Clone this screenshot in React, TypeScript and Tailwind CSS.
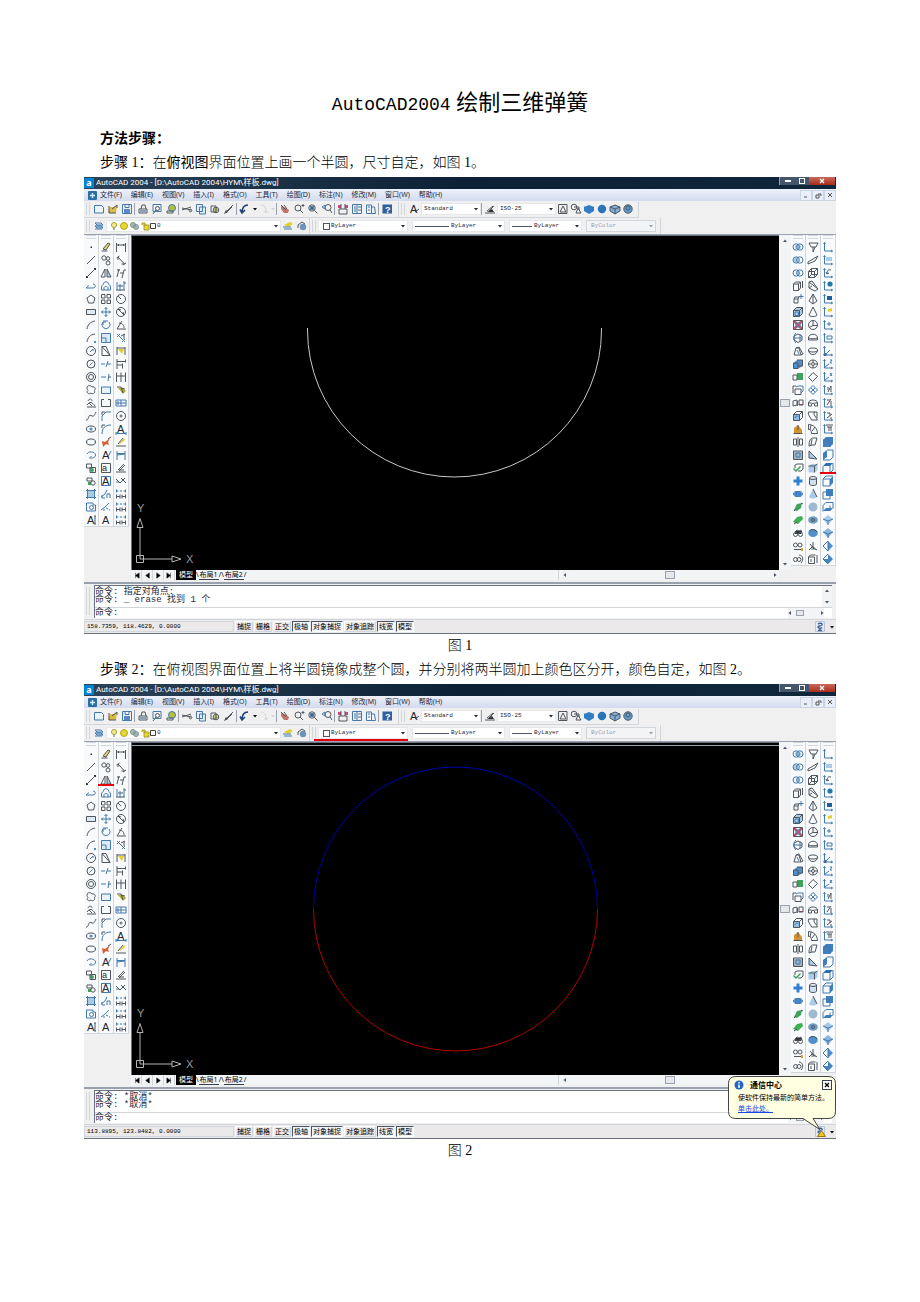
import clsx from "clsx";
import React from "react";

type Tool = {
  name: string;
  k?: string; // dark strokes
  b?: string; // blue strokes
  f?: string; // filled shape
  c?: string; // fill colour
  t?: string; // letter
};

const circ = (x: number, y: number, r: number, ry = r) =>
  `M${x - r} ${y}a${r} ${ry} 0 1 0 ${r * 2} 0a${r} ${ry} 0 1 0 ${-r * 2} 0z`;

const BLUE = "#4f8fcb";
const PALE = "#a9cbe8";
const YELLOW = "#e0cf2c";
const GREEN = "#3fa35c";
const DARK = "#2d3238";

const cube = "M1.5 4.5h6v6h-6zM1.5 4.5l3-3h6v6l-3 3M7.5 4.5l3-3";
const axes = "M2.5 1.500v8.500h8M1.500 3l1-1.500 1 1.500M9 9l1.500 1-1.500 1";
const dims = "M1.500 6.500v4M5 6.500v4M7 6.500v4M10.500 6.500v4M1.500 8.500h3.500M7 8.500h3.500";
const dimsTop = "M1.500 3h2M5 3h2M8.500 3h2M1.500 1.500v3M10.500 1.500v3";

const DRAW: Tool[] = [
  { name: "Point", f: "M5.500 5.500h1.500v1.500h-1.500z", c: DARK },
  { name: "Line", k: "M2 10L10 2" },
  { name: "Construction line", k: "M2 10L10 2", f: "M1 9h2v2h-2zM9 1h2v2h-2z", c: DARK },
  { name: "Polyline", b: "M1 8h7c3 0 3-4 0-4M1 8l3-2.500" },
  { name: "Polygon", k: "M6 2L10 5 8.500 10h-5L2 5z" },
  { name: "Rectangle", k: "M1.500 3.500h9v5h-9z", f: "M2 3.500h9v5h-9z", c: "#dceaf6" },
  { name: "Arc", k: "M2 10C2.500 6 5 3 10 2" },
  { name: "Arc continue", k: "M2 10C2.500 6 5 2.500 10 2", f: "M9 9h2v2h-2z", c: BLUE },
  { name: "Circle", k: circ(6, 6, 4.5), b: "M5 7l3-3v2" },
  { name: "Circle diameter", k: circ(6, 6, 4), b: "M4.500 7.500l3-3" },
  { name: "Donut", k: circ(6, 6, 4.5) + circ(6, 6, 2.5) },
  { name: "Revision cloud", k: "M2 4c0-3 4-3 5-1c3-1 4 2 2.500 3.500c1 3-2 4-3.500 2.500c-3 2-5-1-3-2.500c-1-1-1-2-1-2.500z" },
  { name: "Sketch", k: "M3 4c1-3 4-2 4 0M2 8c3-4 5-3 8 1M2 10h9M4 6l3 3" },
  { name: "Spline", k: "M1 10C4 11 3 4 6 5.500S9 6 11 2" },
  { name: "Ellipse", k: circ(6, 6, 4.5, 3), f: circ(6, 6, 1.6), c: BLUE },
  { name: "Ellipse axis", k: circ(6, 6, 4.5, 3), b: "M1.500 6h1M9.500 6h1" },
  { name: "Elliptical arc", b: "M2 5c1-3 8-3 8.500 1c0 3-4 3.500-6 3M4.500 9l2-2" },
  { name: "Insert block", k: "M1.500 2h5v4h-5zM5 5.500h5.500v5h-5.500z", f: circ(7, 8, 2), c: GREEN },
  { name: "Make block", k: "M2 3h5v3h-5z" + circ(8, 8, 2.2), f: "M3 7h3v3h-3z", c: GREEN },
  { name: "Hatch", b: "M2.500 1v10M9.500 1v10M1 2.500h10M1 9.500h10", f: "M2.500 2.500h7v7h-7z", c: PALE },
  { name: "Region", b: "M1.500 2h6.500v2h2.500v6h-9z" + circ(6.5, 6.5, 2) },
  { name: "Text", t: "A", k: "M10 2v8M9 2h2M9 10h2" },
];

const MODIFY: Tool[] = [
  { name: "Erase", f: "M3 8l5-6 2 1-4 6z", c: "#e5d46b", k: "M1.500 10h6M3 8l5-6 2 1-4 6z" },
  { name: "Copy", k: circ(4, 4, 2.2) + circ(8, 4.5, 1.8) + circ(8, 9, 2) },
  { name: "Mirror", k: "M5 2v8h-4zM7 2v8h4z", f: "M7 2v8h4z", c: PALE },
  { name: "Offset", b: "M1.500 10V7c0-2 2-2 2-3c0-3 5-3 5 0c0 1 2 1 2 3v3zM4 10V8c0-2 4-2 4 0v2" },
  { name: "Array", k: "M1.500 1.500h3.500v3.500h-3.500zM7 1.500h3.500v3.500h-3.500zM1.500 7h3.500v3.500h-3.500zM7 7h3.500v3.500h-3.500z" },
  { name: "Move", b: "M6 1.500v9M1.500 6h9M4.500 3l1.500-1.500 1.500 1.500M4.500 9l1.500 1.500 1.500-1.500M3 4.500l-1.500 1.500 1.500 1.500M9 4.500l1.500 1.500-1.500 1.500" },
  { name: "Rotate", b: "M3 3a4 4 0 1 0 6 0M3 3h3M3 3v3M3 2h5" },
  { name: "Scale", b: "M1.500 1.500h9v9h-9zM1.500 6h4.500v4.500", f: "M1.500 1.500h9v9h-9z", c: "#dceaf6" },
  { name: "Stretch", k: "M2 1.500v9h8zM2 1.500h4l4 9" },
  { name: "Trim", b: "M1 6h4M7 6h4M6 9l2-6" },
  { name: "Extend", b: "M1 6h5M9 3l-1 7", k: "M9 6h2" },
  { name: "Break at point", b: "M1.500 3h9v6.500h-9z", f: "M1.500 3h9v6.500h-9z", c: "#eaf2fa" },
  { name: "Break", k: "M4 2.500h-2.500v7h9v-7h-2.500" },
  { name: "Chamfer", b: "M2 11V6l4-4h5", k: "M2 5V2h3" },
  { name: "Fillet", b: "M2 11c0-6 3-9 9-9", k: "M2 5V2h3" },
  { name: "Explode", f: "M2 5l3 1 5-4-2 4 1 3-3-1-3 3z", c: "#db5d33", k: "M8 3l3-2" },
  { name: "Edit polyline", t: "A", b: "M8 8l3-6" },
  { name: "Multiline text", k: "M1.500 1.500h9v9h-9z", t: "a" },
  { name: "Edit text", b: "M1.500 1.500h9v9h-9z", t: "A" },
  { name: "Edit spline", b: "M1 9l4-3 2-4M2 7v3h3M7 10V6h3v4" },
  { name: "Edit attribute", b: "M1 9l4-3 4-4M6 7l2 1M4 8v2M9 9h1" },
  { name: "Text style", t: "A" },
];

const DIMENSION: Tool[] = [
  { name: "Linear dimension", k: "M1.500 2v9M10.500 2v9M1.500 4h9M3.500 3v2M8.500 3v2" },
  { name: "Aligned dimension", k: "M1.500 4l3-2M8 11l3-2M3 3l6.500 7M3 3v3M9.500 10h-3" },
  { name: "Ordinate dimension", k: "M2 10L4 2M5 6h3M7 11L9 3h2M2 3h3" },
  { name: "Jogged dimension", b: "M2 2v8M5 4v7M9 1v9", k: "M1 10h9M3 6h5M9 3h2" },
  { name: "Radius dimension", k: circ(6, 6, 4.5) + "M6 6L3 3" },
  { name: "Diameter dimension", k: circ(6, 6, 4.5) + "M3 3l6 6M3 3l3 1M9 9l-1-3" },
  { name: "Angular dimension", k: "M7 2L2 10h9M4 4c4 0 5 3 5 5" },
  { name: "Quick dimension", b: "M2 2l8 8M2 5l3-3M7 10l3-3", k: "M6 4l4-2M9 2v5M2 2l4 4" },
  { name: "Quick select", k: "M2 2v8M10 2v8M2 3h8", f: "M3 4h6l-2 5z", c: YELLOW },
  { name: "Baseline dimension", k: "M2 1v10M2 3.500h9M10.500 1.500v3M2 7h6M7.500 5.500v5" },
  { name: "Continue dimension", k: "M1.500 1.500v9.500M6 1.500v9.500M10.500 1.500v9.500M1.500 5h9" },
  { name: "Leader", k: "M2 3h4l2 6M6 4l4 1", f: "M3 4h5l3 3-3 3z", c: "#b6ac22" },
  { name: "Tolerance", b: "M1 3h10v6H1zM6 3v6M3 4v4M1 6h10" },
  { name: "Center mark", k: circ(6, 6, 4.5) + "M4.500 6h3M6 4.500v3" },
  { name: "Edit dimension", t: "A", b: "M1 10.500h10M1 9v3M11 9v3" },
  { name: "Edit dimension text", k: "M1 10h10M3 8l5-6", f: "M4 8l5-6 1 2-5 4z", c: YELLOW },
  { name: "Update dimension", b: "M2 2v9M10 2v9M2 4.500h8M2 6l8-1" },
  { name: "Dimension style", k: "M1 10h10M3 8l6-6M4 9l6-6M4 8h5" },
  { name: "Override", k: "M1 4l4 4M5 8l5-5M6 3l5 5", b: "M1 7h3" },
  { name: "Spacing", k: dims, b: dimsTop },
  { name: "Break dimension", k: dims, b: dimsTop },
  { name: "Inspect", k: dims, b: dimsTop },
];

const SOLIDS_EDIT: Tool[] = [
  { name: "Union", b: circ(4.2, 6, 3.2) + circ(7.8, 6, 3.2), f: circ(6, 6, 3, 2.5), c: PALE },
  { name: "Subtract", b: circ(4.2, 6, 3.2) + circ(7.8, 6, 3.2), f: circ(4, 6, 2.5), c: PALE },
  { name: "Intersect", b: circ(4.2, 6, 3.2) + circ(7.8, 6, 3.2), f: circ(6, 6, 1.4, 2.5), c: PALE },
  { name: "Extrude faces", k: "M1.500 4h5v6.500h-5zM1.500 4l2-2h5l-2 2M8.500 2v6l-2 2.500M10.500 1v7" },
  { name: "Move faces", k: "M2 6h4v4h-4zM2 6l1-2h4l-1 2", b: "M9 1v5M6.500 3.500h5" },
  { name: "Offset faces", k: cube, b: "M3 6h3.500v3.500h-3.500z", f: "M1.500 4.500l3-3h6v6l-3 3h-6z", c: PALE },
  { name: "Delete faces", k: "M1.500 1.500h9v9h-9z", b: "M4 4h4v4h-4z", f: "M2 2h2l2 2.500 2-2.500h2v2l-2.500 2 2.500 2v2h-2l-2-2.500-2 2.500h-2v-2l2.500-2-2.500-2z", c: "#bf5866" },
  { name: "Rotate faces", k: "M2 4l4-2 4 2v4l-4 2.500-4-2.500z", b: "M4 1c-3 3-3 7 0 10M8 2v8M2 6h8" },
  { name: "Taper faces", k: "M2 10l2-7h3l2 7zM4 3l3-1 4 7-2 1", b: "M5 5l2 4" },
  { name: "Copy faces", k: "M1.500 5h4.500v5.500h-4.500zM5 2h5.500v6h-4.500", f: "M1.500 5l3.500-3h5.500v6l-4 2.500h-5z", c: BLUE },
  { name: "Color faces", k: "M1 4h4v5h-4z", f: "M5 2h6v7h-6z", c: GREEN },
  { name: "Copy edges", k: "M3 5h6v5.500h-6zM1 2h3M1 2v7", b: "M4 3l2-1h5v5l-2 2" },
  { name: "Color edges", k: "M1 4l4-1v5l-4 1zM7 3h4v5h-4z", f: "M5 4h1v5h-1zM7 7h4v1h-4z", c: "#c8435a" },
  { name: "Imprint", k: cube, b: "M3 8c1-3 3-2 3-1", f: "M1.500 4.500h6v6h-6z", c: "#8ec0e6" },
  { name: "Clean", f: "M2 10V5l4-3 4 5v3z", c: "#d39335", k: "M1.500 10.500h9M6 2v5" },
  { name: "Separate", k: "M1.500 3h3v6h-3zM7.500 3h3v6h-3zM6 1v10" },
  { name: "Shell", k: "M1.500 2h9v8.500h-9z", b: "M4 4h4v4h-4z", f: "M2 2.500h8v8h-8z", c: "#9fb5c4" },
  { name: "Check", k: "M3 3l2-1h6v5l-2 2h-3M3 3v3", f: "M1 7l1-1 2 2 4-4 1 1-5 5z", c: GREEN },
  { name: "3D move", f: "M4.500 1.500h3v3h3v3h-3v3h-3v-3h-3v-3h3z", c: "#2f80cf" },
  { name: "3D rotate", b: circ(6, 6, 4.5, 2.5) + "M4 3v6M8 3v6", f: circ(6, 6, 4, 2.5), c: "#3f8dda" },
  { name: "Render", f: "M2 9l3-6 5-1-1 5-4 3z", c: GREEN, k: "M2 10l2-2M9 2l2 1" },
  { name: "Scene", f: "M1 8l4-5 5-1 1 3-5 5z", c: "#3db04f", k: "M2 10l3-2" },
  { name: "Light", k: circ(3.5, 7.5, 2) + circ(8.5, 7.5, 2) + "M3 5l2-2 2 1 2-1 1 3", f: "M3 4h6v3h-6z", c: DARK },
  { name: "Materials", k: circ(3.5, 5, 2) + circ(8, 5, 2) + "M2 9.500h7", f: "M9 8h2v3h-2z", c: "#d7a126" },
  { name: "Mapping", k: circ(3.5, 6.5, 2) + circ(7, 6.5, 2) + "M7 2c4 0 5 5 2 8" },
];

const SURFACES: Tool[] = [
  { name: "2D solid", k: "M2 2h9l-2 4h-5zM6 6v5l2-5" },
  { name: "3D face", k: "M1 8l5-3 5-3-3 5-7 3z" },
  { name: "Box", k: cube + "M4.500 1.500v6h6M4.500 7.500l-3 3" },
  { name: "Wedge", k: "M2 2v6l6 3 3-2zM2 2l3-1 6 8M2 8l3-2" },
  { name: "Pyramid", k: "M6 1L2 8l4 3 4-3zM6 1v10" },
  { name: "Cone", k: "M6 1L2 9c0 2 8 2 8 0z" },
  { name: "Sphere", k: circ(6, 6, 4.5) + "M6 1.500v5l-4 2M6 6.500h4.500" },
  { name: "Dome", k: "M1.500 6c0-5 9-5 9 0v2h-9zM1.500 6c2 1 7 1 9 0" },
  { name: "Dish", k: circ(6, 5, 4.5, 2) + "M1.500 5c0 6 9 6 9 0" },
  { name: "Torus", k: circ(6, 6, 4.5, 4) + circ(6, 6, 1.5) + "M6 2v2.500M6 7.500v2.500M1.500 6h3M7.500 6h3" },
  { name: "Edge", k: "M6 1.500l4.500 4-5 5-4-4z" },
  { name: "3D mesh", b: "M6 1.500l4.500 4.500-4.500 4.500-4.500-4.500zM4 4l4 4M8 4l-4 4" },
  { name: "Revolved surface", k: "M1.500 9V6c0-4 9-4 9 0v3h-3V7c0-1-3-1-3 0v2zM1.500 6h3M7.500 6h3" },
  { name: "Tabulated surface", k: "M1.500 2h6c-2 3 2 5 3 8h-6c-1-3-4-5-3-8zM7 2l3 0v6" },
  { name: "Ruled surface", k: "M1.500 1.500c5 0 9 4 9 9h-6c0-3-1-4-3-4zM4 2l-1 5M8 4l-3 4" },
  { name: "Edge surface", k: "M2 10c0-6 2-8 4-8h4l-2 7h-3zM5 3l-1 6" },
  { name: "Solid wedge", f: "M2 2v7l8 1z", c: PALE, k: "M2 2v7l8 1z" },
  { name: "Solid box", f: "M1.500 4l3-2h6v6l-3 2.500h-6z", c: PALE, k: "M7.500 4v6.500M1.500 4h6l3-2" },
  { name: "Solid cylinder", f: "M2.500 3h7v7h-7z", c: "#cfe0ef", k: circ(6, 3, 3.5, 1.5) + "M2.500 3v6c0 2 7 2 7 0V3" },
  { name: "Solid cone", f: "M6 1L2 9c2 2 6 2 8 0z", c: PALE, k: "M6 1l4 8" },
  { name: "Solid sphere", f: circ(6, 6, 4.5), c: "#9fb9d2" },
  { name: "Solid torus", f: circ(6, 6, 4.8, 3.8), c: "#6f9cc2", k: circ(6, 6, 1.5) },
  { name: "Revolve", f: circ(6, 6, 4.8, 4), c: BLUE, k: "M2 4c2-2 6-2 8 1" },
  { name: "Slice", k: "M2 10l4-4M6 2v5l4 3M3 4l4 5", f: "M5 6l5 4h-6z", c: "#a5adb6" },
  { name: "Section", k: "M1.500 4h6v6.500h-6zM4 6v3M1.500 4l2-2h5M10 2v8" },
];

const VIEWS: Tool[] = [
  { name: "UCS", b: axes },
  { name: "Display UCS", b: axes, f: "M4 3h6v4h-6z", c: PALE },
  { name: "UCS previous", b: axes, k: "M9 3c-3-1-4 1-4 4M4 5l1 2 2-1" },
  { name: "World UCS", b: axes, f: circ(8, 4, 2.6), c: "#2379a8" },
  { name: "Object UCS", b: axes, f: "M5 3h5v4h-5z", c: "#1f5f9b" },
  { name: "Face UCS", b: axes, f: "M6 3l4-1v3l-4 1z", c: YELLOW },
  { name: "View UCS", b: axes + "M7 3v4M5 5h4" },
  { name: "Origin UCS", b: axes + "M5 4h5v3h-5z" },
  { name: "Z axis vector", b: axes + "M3 10l5-5", f: circ(3, 9.5, 1.5), c: DARK },
  { name: "3 point UCS", b: axes + "M3 9l4-3M8 2h2l-2 3h2" },
  { name: "X rotate UCS", b: axes + "M3 9l4-3M8 2l2 3M10 2l-2 3" },
  { name: "Y rotate UCS", b: axes, k: "M6 8l3-6M9 2v6M6 3v3" },
  { name: "Z rotate UCS", b: axes, k: "M5 8l4-6M9 4v5M5 3h3" },
  { name: "Apply UCS", b: axes, k: "M5 3h3v3M5 8l5-4M9 7v2" },
  { name: "Named UCS", b: axes, k: "M4 2h7M5 4h5M7 4v4M9 4v4" },
  { name: "Top view", f: "M1 4l3-3h7v7l-3 3h-7z", c: "#3e7fc0", b: "M1 4h7v7" },
  { name: "Left view", f: "M1 4l4-3v7l-4 3z", c: "#3e7fc0", b: "M5 1h6v7l-3 3h-7" },
  { name: "Plan view", f: "M1 4l3-3h7l-3 3z", c: "#2c6eb4", b: "M1 4v7h7v-7M11 1v7l-3 3" },
  { name: "Right view", f: "M8 4l3-3v7l-3 3z", c: "#3e7fc0", b: "M1 4h7v7h-7zM1 4l3-3h7" },
  { name: "Back view", f: "M4 1h7v7h-7z", c: "#3e7fc0", b: "M1 4h7v7h-7z" },
  { name: "Bottom view", f: "M1 10l3-3h7l-3 3z", c: "#3e7fc0", b: "M1 10.500v-6l3-3h7v6M8 4.500v5.500" },
  { name: "SW isometric", f: "M6 1l5 4-5 6-5-6z", c: PALE, b: "M1 5l5 2 5-2M6 7v4" },
  { name: "SE isometric", f: "M6 1l5 4-5 6-5-6z", c: "#8bb6dc", b: "M1 5l5 2 5-2M6 7v4" },
  { name: "NE isometric", f: "M6 1l5 5-5 5z", c: BLUE, b: "M6 1l-5 5 5 5M6 1v10" },
  { name: "NW isometric", f: "M6 1l5 5-5 5zM6 6l-5 0 5 5z", c: "#4682bd", b: "M6 1l-5 5 5 5" },
];

const STANDARD: Tool[][] = [
  [
    { name: "New", b: "M1.500 2.500h7l2 2v5.500h-9z", f: "M2 3h7v6h-7z", c: "#eaf4fc" },
    { name: "Open", f: "M1 10l2-6h4l3-2-1 8z", c: "#d9bb45", k: "M2 3v7h7M5 6l5-4v3" },
    { name: "Save", b: "M1.500 1.500h9v9h-9zM4 1.500v3h4v-3", f: "M3 6h6v4.500h-6z", c: "#5a86c5" },
  ],
  [
    { name: "Plot", k: "M2 6h8v4h-8zM4 6l1-4h3l1 4", f: "M3 7h6v2h-6z", c: "#8aa0ba" },
    { name: "Plot preview", b: "M2 1.500h8v7h-8z", k: circ(6.5, 5.5, 2) + "M5 7l-3 4" },
    { name: "Publish", f: circ(7, 5, 3.5), c: "#b5bf3e", b: circ(7, 5, 3.5), k: "M2 8h6v2h-6z" },
  ],
  [
    { name: "Cut", k: "M1 5l9 2M1 7l9-3" + circ(9.5, 7.5, 1.3) },
    { name: "Copy", b: "M1.500 1.500h6v7h-6zM4.500 4h6v7h-6z", f: "M4.500 4h6v6.500h-6z", c: "#dcebf8" },
    { name: "Paste", k: "M2 3h5v6h-5z" + circ(7, 7, 2.8), f: circ(7, 7, 2), c: "#b9bf62" },
    { name: "Match properties", k: "M2 10l8-8M3 10l6-6", f: "M1 11l2-4 2 2z", c: DARK },
  ],
];

const ZOOMS: Tool[][] = [
  [
    { name: "Pan", f: "M2 3l3 1 5 3-1 3h-4l-3-4z", c: "#c27468", k: "M2 2l5 5M5 2l3 4" },
    { name: "Zoom realtime", k: circ(5, 5, 3) + "M7 7l3 3M10 1v3M8.500 2.500h3" },
    { name: "Zoom window", k: circ(5, 5, 3.2) + "M7.500 7.500l3 3M3.500 5h3M5 3.500v3", f: "M3 3h4v4h-4z", c: BLUE },
    { name: "Zoom previous", k: circ(7, 4.5, 3) + "M9 7l2 3", b: "M1 4l3-2v4z" },
  ],
  [
    { name: "Properties", k: "M2 6h8v5h-8zM4 1v5M8 1v5", f: "M1 2h3v3h-3zM8 2h3v3h-3z", c: "#c94c86" },
    { name: "DesignCenter", b: "M1.500 1.500h9v9h-9zM6 1.500v9M3 4h2M3 6h2M3 8h2M7 4h3M7 7h3" },
    { name: "Tool palettes", b: "M1.500 2h5v8.500h-5zM6.500 4h3l1 6.500h-4zM3 4h2M3 7h2" },
  ],
  [{ name: "Help", f: "M1.500 1.500h9.500v9h-9.500z", c: "#2f5f9f", t: "?" }],
];

const SHADING: Tool[] = [
  { name: "2D wireframe", k: "M1.500 1.500h8.500v9h-8.500zM6 3l-3 6h6z" },
  { name: "3D wireframe", k: circ(4, 4, 2.8) + "M4 4h5v3M8 5l-2 5h5z" },
  { name: "Flat shaded", f: "M1 4l5-2 5 2v4l-5 3-5-3z", c: "#2c7fca", b: "M1 4l5 2 5-2M6 6v4" },
  { name: "Gouraud shaded", f: circ(6, 6, 4.2), c: "#2774bd", b: "M4 4h2" },
  { name: "Flat with edges", f: "M1 4l5-2 5 2v4l-5 3-5-3z", c: "#7eb0de", k: "M1 4l5-2 5 2v4l-5 3-5-3zM1 4l5 2 5-2M6 6v5" },
  { name: "Gouraud with edges", f: circ(6, 6, 4.2), c: "#5e9dd2", k: circ(6, 6, 4.2) + circ(6, 5, 2) },
];

const MENUS = ["文件(F)", "编辑(E)", "视图(V)", "插入(I)", "格式(O)", "工具(T)", "绘图(D)", "标注(N)", "修改(M)", "窗口(W)", "帮助(H)"];

const MODES: [string, boolean][] = [
  ["捕捉", false],
  ["栅格", false],
  ["正交", false],
  ["极轴", true],
  ["对象捕捉", true],
  ["对象追踪", false],
  ["线宽", true],
  ["模型", true],
];

function Icon({ tool }: { tool: Tool }) {
  return (
    <svg viewBox="0 0 12 12" className="size-3 shrink-0" fill="none" strokeWidth="1" aria-hidden="true">
      {tool.f && <path d={tool.f} fill={tool.c} />}
      {tool.k && <path d={tool.k} stroke="#50565e" />}
      {tool.b && <path d={tool.b} stroke="#4479ab" />}
      {tool.t && (
        <text
          x={tool.t === "?" ? 4 : 2}
          y={tool.t === "a" ? 9 : 10}
          fontSize={tool.t === "A" ? 11 : 9}
          fontWeight={tool.t === "?" ? 700 : 400}
          fontFamily="Liberation Sans, sans-serif"
          fill={tool.t === "?" ? "#fff" : "#22272c"}
        >
          {tool.t}
        </text>
      )}
    </svg>
  );
}

function ToolButton({ tool, narrow }: { tool: Tool; narrow?: boolean }) {
  return (
    <button aria-label={tool.name} className={clsx("flex items-center justify-center h-[13px] shrink-0", narrow ? "w-[13px]" : "w-3.5")}>
      <Icon tool={tool} />
    </button>
  );
}

function Arrow({ className }: { className?: string }) {
  return (
    <svg viewBox="0 0 4 4" className={clsx("size-1 shrink-0", className)} aria-hidden="true">
      <path d="M0 1h4L2 3.500z" fill="currentColor" />
    </svg>
  );
}

function Grip() {
  return <div className="w-1 h-3 mx-0.5 shrink-0 border-x border-gray-300" />;
}

function Divider() {
  return <div className="w-0.5 h-3 shrink-0 border-l border-gray-400" />;
}

function Dropdown({
  label,
  value,
  className,
  children,
  disabled,
  pad,
}: {
  label: string;
  value: string;
  className: string;
  children?: React.ReactNode;
  disabled?: boolean;
  pad?: string;
}) {
  return (
    <div className={clsx("relative flex items-center h-3 shrink-0 border", disabled ? "bg-gray-100 border-gray-300 text-gray-400" : "bg-white border-gray-200 text-gray-800", className)}>
      <div className="absolute left-0.5 flex items-center pointer-events-none">{children}</div>
      <select
        aria-label={label}
        disabled={disabled}
        className={clsx("appearance-none w-full h-full bg-transparent font-['Liberation_Mono',monospace] text-[6px] leading-[10px]", pad ?? "pl-0.5")}
      >
        <option>{value}</option>
      </select>
      <Arrow className="absolute right-0.5 pointer-events-none" />
    </div>
  );
}

function Palette({ tools, marked }: { tools: Tool[]; marked?: string }) {
  return (
    <div className="w-[15px] shrink-0 bg-slate-50 border-r border-b border-gray-300 self-start">
      <div className="h-1 mx-0.5 mb-px border-y border-gray-300" />
      {tools.map((tool) => (
        <div key={tool.name} className="relative flex justify-center h-[13px]">
          <ToolButton tool={tool} narrow />
          {tool.name === marked && <div className="absolute -inset-x-px bottom-0 h-0.5 bg-red-600" />}
        </div>
      ))}
    </div>
  );
}

function TitleBar() {
  return (
    <div className="flex items-center h-3 bg-linear-to-r from-[#2b4258] via-[#0c2136] to-[#10263b] text-white">
      <div className="flex items-center justify-center size-2.5 mr-0.5 bg-sky-600 text-[9px] leading-[8px] font-bold">a</div>
      <div className="font-['Roboto','Noto_Sans_CJK_SC',sans-serif] text-[8px] leading-3 whitespace-nowrap">AutoCAD 2004 - [D:\AutoCAD 2004\HYM\样板.dwg]</div>
      <div className="flex ml-auto mr-px self-start h-2">
        <button aria-label="Minimize" className="flex items-center justify-center w-4 bg-slate-600 border-l border-slate-400">
          <div className="w-1.5 h-0.5 bg-white" />
        </button>
        <button aria-label="Restore" className="flex items-center justify-center w-3.5 bg-slate-600">
          <div className="size-1.5 border border-white" />
        </button>
        <button aria-label="Close" className="flex items-center justify-center w-[26px] bg-linear-to-b from-[#c9685c] to-[#a82a18]">
          <svg viewBox="0 0 6 6" className="size-1.5" aria-hidden="true">
            <path d="M1 1l4 4M5 1L1 5" stroke="#fff" strokeWidth="1.3" />
          </svg>
        </button>
      </div>
    </div>
  );
}

function MenuBar() {
  return (
    <div className="flex items-center h-3 pl-1 bg-linear-to-b from-[#eef1fa] to-[#d3dbef]">
      <svg viewBox="0 0 9 9" className="size-[9px] mr-[3px] shrink-0" aria-hidden="true">
        <rect width="9" height="9" rx="1" fill="#2b6fa5" />
        <path d="M2 4.500h5M4.500 2v5" stroke="#d6ecfa" strokeWidth="1.4" />
      </svg>
      <div className="flex gap-[9px]">
        {MENUS.map((menu) => (
          <button key={menu} className="text-[7px] leading-3 whitespace-nowrap text-gray-800">
            {menu}
          </button>
        ))}
      </div>
      <div className="flex ml-auto">
        {["M2 6h3", "M2 4h3v3h-3zM4 3h3v2", "M2 2l4 4M6 2l-4 4"].map((d) => (
          <button key={d} aria-label="Document window" className="flex items-center justify-center w-3 h-[11px] border border-slate-300 bg-[#e8eefa]">
            <svg viewBox="0 0 8 8" className="size-2" fill="none" stroke="#555" aria-hidden="true">
              <path d={d} />
            </svg>
          </button>
        ))}
      </div>
    </div>
  );
}

function StandardToolbar() {
  return (
    <div className="flex items-center h-[17px]">
      <div className="flex items-center h-4 pr-1 border-r border-b border-gray-300">
        <Grip />
        {STANDARD.map((group) => (
          <React.Fragment key={group[0].name}>
            {group.map((tool) => (
              <ToolButton key={tool.name} tool={tool} />
            ))}
            <Divider />
          </React.Fragment>
        ))}
        <button aria-label="Undo" className="w-3.5 text-[#1f3f78]">
          <svg viewBox="0 0 12 12" className="size-3" fill="none" stroke="currentColor" strokeWidth="1.6" aria-hidden="true">
            <path d="M10 2c-4 0-6 3-6 8M2 6.500l2 3.500 3-3" />
          </svg>
        </button>
        <Arrow className="mx-px" />
        <button aria-label="Redo" className="w-3 text-gray-300">
          <svg viewBox="0 0 12 12" className="size-3" fill="none" stroke="currentColor" aria-hidden="true">
            <path d="M3 2c4 0 5 3 5 7M6 8l2 2 2-2" />
          </svg>
        </button>
        <Arrow className="mx-px text-gray-300" />
        {ZOOMS.map((group) => (
          <React.Fragment key={group[0].name}>
            <Divider />
            {group.map((tool) => (
              <ToolButton key={tool.name} tool={tool} />
            ))}
          </React.Fragment>
        ))}
      </div>
      <div className="flex items-center h-4 pr-1 border-r border-b border-gray-300">
        <Grip />
        <ToolButton tool={{ name: "Text style manager", t: "A", k: "M7 9l4-3" }} />
        <Dropdown label="Text style" value="Standard" className="w-[60px]" />
        <Divider />
        <ToolButton tool={{ name: "Dimension style manager", k: "M1 10h10M3 8l6-5M4 9l6-6", f: "M3 9l5-3 2 3z", c: DARK }} />
        <Dropdown label="Dimension style" value="ISO-25" className="w-[59px]" />
        {SHADING.map((tool) => (
          <ToolButton key={tool.name} tool={tool} narrow />
        ))}
      </div>
    </div>
  );
}

function LayerToolbar({ marked }: { marked?: boolean }) {
  return (
    <div className="flex items-center h-[17px] border-b border-gray-400">
      <div className="flex items-center h-4 border-r border-gray-300">
        <Grip />
        <ToolButton tool={{ name: "Layer manager", b: "M2 3h6l2 2h-6zM2 6h6l2 2h-6zM2 9h7", f: "M2 5h8v3h-7z", c: PALE }} />
        <Dropdown label="Layer" value="0" className="w-[175px]" pad="pl-[50px]">
          <svg viewBox="0 0 48 10" className="w-12 h-2.5" fill="none" aria-hidden="true">
            <path d={circ(5, 4, 2.5)} fill="#f5ef8e" stroke="#a69a35" />
            <path d="M4 8h2" stroke="#555" />
            <path d={circ(15, 5, 3.5)} fill="#e6d82e" stroke="#b3a61c" />
            <path d={circ(24, 4, 2.5) + circ(27, 6, 2.5)} fill="#a7b8b4" stroke="#7e9490" />
            <path d="M33 4V2h3v3M35 4h5v5h-5z" fill="#e6d82e" stroke="#a69a35" />
            <path d="M41.500 2.500h5v5h-5z" fill="#fff" stroke="#444" />
          </svg>
        </Dropdown>
        <ToolButton tool={{ name: "Make layer current", f: "M2 5l6-3 3 2-5 3z", c: YELLOW, b: "M1 7h8M2 9h8" }} />
        <ToolButton tool={{ name: "Layer previous", f: circ(7, 7, 3.2), c: "#6f93b7", k: "M2 5l4-3 3 2M2 5v3" }} />
      </div>
      <div className="flex items-center gap-1 h-4 pr-1 border-r border-gray-300">
        <Grip />
        <div className="relative -ml-1">
          <Dropdown label="Color" value="ByLayer" className="w-[90px]" pad="pl-3">
            <div className="size-[7px] ml-0.5 border border-gray-600" />
          </Dropdown>
          {marked && <div className="absolute -left-1 right-0 top-3 h-0.5 bg-red-600" />}
        </div>
        <Dropdown label="Linetype" value="ByLayer" className="w-[93px]" pad="pl-[38px]">
          <div className="w-[34px] border-t border-gray-600" />
        </Dropdown>
        <Dropdown label="Lineweight" value="ByLayer" className="w-[73px]" pad="pl-6">
          <div className="w-5 border-t border-gray-600" />
        </Dropdown>
        <Dropdown label="Plot style" value="ByColor" className="w-[70px]" pad="pl-1" disabled />
      </div>
    </div>
  );
}

function Canvas({ full }: { full?: boolean }) {
  return (
    <div className={clsx("relative bg-black border-l border-t border-gray-500", full ? "h-[333px]" : "h-[335px]")}>
      <svg viewBox={full ? "0 0 646 332" : "0 0 646 334"} className="w-full h-full" fill="none" aria-hidden="true">
        {full ? (
          <>
            <path d="M181 166a142 142 0 0 1 284 0" stroke="#0000a8" />
            <path d="M181 166a142 142 0 0 0 284 0" stroke="#b40000" />
          </>
        ) : (
          <path d="M175 92v2a147 147 0 0 0 294 0v-2" stroke="#c8c8c8" />
        )}
      </svg>
      {full && <div className="absolute inset-x-0 top-0.5 border-t border-gray-400" />}
      <svg viewBox="0 0 70 70" className="absolute left-0 bottom-0 size-[70px]" fill="none" stroke="#b5b5b5" aria-hidden="true">
        <path d="M4.500 55.500h7v7h-7zM8 59V27M5 27.500l3-9 3 9zM8 59h32M40 56l9 3-9 3z" />
        <text x="5" y="12" fontSize="11" fontFamily="Liberation Sans, sans-serif" fill="#9a9a9a" stroke="none">
          Y
        </text>
        <text x="54" y="63" fontSize="11" fontFamily="Liberation Sans, sans-serif" fill="#9a9a9a" stroke="none">
          X
        </text>
      </svg>
    </div>
  );
}

function LayoutTabs() {
  return (
    <div className="flex items-center h-2.5 bg-gray-100 text-black text-[7px] leading-[10px]">
      {["M3 1v6M7 1v6L3 4z", "M6 1v6L2 4z", "M2 1v6l4-3z", "M5 1v6M1 1v6l4-3z"].map((d) => (
        <button key={d} aria-label="Scroll tabs" className="flex items-center justify-center w-[11px] h-2.5 border-r border-gray-300">
          <svg viewBox="0 0 8 8" className="size-[7px]" aria-hidden="true">
            <path d={d} fill="#000" stroke="#000" strokeWidth=".6" />
          </svg>
        </button>
      ))}
      <button className="h-full px-[3px] ml-px bg-black text-white">模型</button>
      <span aria-hidden="true">\</span>
      <button className="px-px border-b border-gray-700 leading-[9px]">布局1</button>
      <span aria-hidden="true">/\</span>
      <button className="px-px border-b border-gray-700 leading-[9px]">布局2</button>
      <span aria-hidden="true">/</span>
      <div className="flex flex-1 items-center justify-between ml-[48%] h-full pl-1 pr-0.5 border-l border-gray-300 text-gray-600">
        <Arrow className="rotate-90" />
        <div className="w-2.5 h-2 bg-gray-200 border border-gray-400" />
        <Arrow className="-rotate-90" />
      </div>
    </div>
  );
}

function Balloon() {
  return (
    <div className="absolute right-0 bottom-2 w-[108px] h-[54px]">
      <svg viewBox="0 0 108 54" className="absolute inset-0 w-full h-full" aria-hidden="true">
        <path
          d="M8 .500h92q7.500 0 7.500 7v28q0 7-7.500 7h-15l7 11-17-11h-67q-7.500 0-7.500-7v-28q0-7 7.500-7z"
          fill="#ffffe1"
          stroke="#444"
        />
      </svg>
      <div className="relative pt-1 pl-2.5 pr-1 text-black">
        <div className="flex items-center">
          <svg viewBox="0 0 10 10" className="size-2.5 -ml-1 mr-1.5" aria-hidden="true">
            <circle cx="5" cy="5" r="4.500" fill="#2467c4" />
            <path d="M5 2v1.500M5 4.500v3.500" stroke="#fff" strokeWidth="1.500" />
          </svg>
          <strong className="text-[8px] leading-[10px]">通信中心</strong>
          <button aria-label="Close message" className="flex items-center justify-center size-2.5 ml-auto border border-gray-700 bg-white">
            <svg viewBox="0 0 6 6" className="size-1.5" aria-hidden="true">
              <path d="M1 1l4 4M5 1L1 5" stroke="#000" strokeWidth="1.300" />
            </svg>
          </button>
        </div>
        <p className="mt-0.5 text-[7px] leading-[11px] whitespace-nowrap">使软件保持最新的简单方法。</p>
        <a href="#update" className="block text-[7px] leading-[11px] text-blue-700 underline">
          单击此处。
        </a>
      </div>
    </div>
  );
}

function CadWindow({
  full,
  lines,
  coords,
}: {
  full?: boolean;
  lines: string[];
  coords: string;
}) {
  return (
    <div className="relative flex flex-col bg-[#f0f0f0] overflow-hidden border-b border-gray-500 font-['Noto_Sans','Noto_Sans_CJK_SC',sans-serif]">
      <TitleBar />
      <MenuBar />
      <StandardToolbar />
      <LayerToolbar marked={full} />
      <div className="flex">
        <div className="flex pr-0.5">
          <Palette tools={DRAW} />
          <Palette tools={MODIFY} marked={full ? "Mirror" : undefined} />
          <Palette tools={DIMENSION} />
        </div>
        <div className="flex-1 min-w-0">
          <Canvas full={full} />
          <LayoutTabs />
        </div>
        <div className={clsx("flex flex-col items-center justify-between w-3 shrink-0 py-1 bg-gray-100 text-gray-600", full ? "h-[333px]" : "h-[335px]")}>
          <Arrow className="rotate-180" />
          <div className="w-2.5 h-2 bg-gray-200 border border-gray-400" />
          <Arrow />
        </div>
        <div className="flex">
          <Palette tools={SOLIDS_EDIT} />
          <Palette tools={SURFACES} />
          <Palette tools={VIEWS} marked={full ? undefined : "Plan view"} />
        </div>
      </div>
      <div className="flex mt-0.5 pt-px pr-1 border-t-2 border-gray-400">
        <div className="w-1 h-7 ml-0.5 mr-1 my-0.5 border-x border-gray-300" />
        <div className="flex-1 bg-white border-l border-t border-gray-500 font-['Liberation_Mono','Noto_Sans_CJK_SC',monospace] text-[9px] text-gray-800">
          <div className="flex justify-between h-[22px] border-b border-gray-300">
            <div className="pt-0.5">
              {lines.map((line, i) => (
                <div key={i} className="leading-[8px] whitespace-pre">
                  {line}
                </div>
              ))}
            </div>
            <div className="flex flex-col items-center justify-around w-2.5 bg-gray-100 text-gray-600">
              <Arrow className="rotate-180" />
              <Arrow />
            </div>
          </div>
          <div className="flex items-center h-2.5 pr-2">
            <label className="flex items-center flex-1 leading-[10px]">
              命令:
              <input className="flex-1 ml-1 h-2 outline-none bg-transparent" />
            </label>
            <div className="flex items-center w-9 h-full bg-gray-100 text-gray-600">
              <Arrow className="rotate-90" />
              <div className="w-2 h-1.5 ml-1 mr-auto bg-gray-200 border border-gray-400" />
              <Arrow className="-rotate-90" />
            </div>
          </div>
        </div>
      </div>
      <div className="flex items-center h-3.5 mt-px gap-px bg-[#ebe9e9] border-t border-gray-300 text-[7px] text-black">
        <div className="w-[150px] h-[11px] pl-0.5 border border-gray-300 font-['Liberation_Mono',monospace] text-[6px] leading-[10px] whitespace-pre">{coords}</div>
        {MODES.map(([mode, on]) => (
          <button
            key={mode}
            aria-pressed={on}
            className={clsx("h-[11px] px-px border leading-[9px] whitespace-nowrap", on ? "border-t-gray-600 border-l-gray-600 border-b-white border-r-white bg-gray-100" : "border-t-white border-l-white border-b-gray-300 border-r-gray-300")}
          >
            {mode}
          </button>
        ))}
        <div className="flex items-center ml-auto pr-0.5 gap-1">
          <svg viewBox="0 0 12 12" className="size-3" fill="none" aria-hidden="true">
            <path d="M1.500 .500h9v10h-9z" fill="#e3e9f3" stroke="#b9c4d6" />
            <path d="M4 3c2-1.500 5-.500 4 1s-4 .500-4 2 3 1.500 4 .500M6 7v3M4 9.500h4" stroke="#3d5f9c" strokeWidth="1.300" />
            {full && <path d="M7.500 4.500l4 6h-8z" fill="#f2c91f" stroke="#9b7b08" />}
          </svg>
          <Arrow />
        </div>
      </div>
      {full && <Balloon />}
    </div>
  );
}

export default function App() {
  return (
    <main className="min-h-screen bg-white pt-[89px] pb-[138px] px-[84px] text-black font-['Liberation_Serif','Noto_Sans_CJK_SC',serif] text-[14px] leading-6">
      <h1 className="mb-2 text-center text-[22px] leading-7 font-normal">
        <span className="font-['Liberation_Mono',monospace] text-[18px]">AutoCAD2004</span> 绘制三维弹簧
      </h1>
      <p className="pl-4 font-bold">方法步骤：</p>
      <p className="pl-4 mb-0.5 font-light">
        <b>步骤 1：</b>在<b>俯视图</b>界面位置上画一个半圆，尺寸自定，如图 1。
      </p>
      <CadWindow lines={["命令: 指定对角点:", "命令: _ erase 找到 1 个"]} coords="158.7359, 118.4629, 0.0000" />
      <p className="text-center font-light">图 1</p>
      <p className="pl-4 mb-0.5 font-light">
        <b>步骤 2：</b>在俯视图界面位置上将半圆镜像成整个圆，并分别将两半圆加上颜色区分开，颜色自定，如图 2。
      </p>
      <CadWindow full lines={["命令: *取消*", "命令: *取消*"]} coords="113.8895, 123.8482, 0.0000" />
      <p className="text-center font-light">图 2</p>
    </main>
  );
}
